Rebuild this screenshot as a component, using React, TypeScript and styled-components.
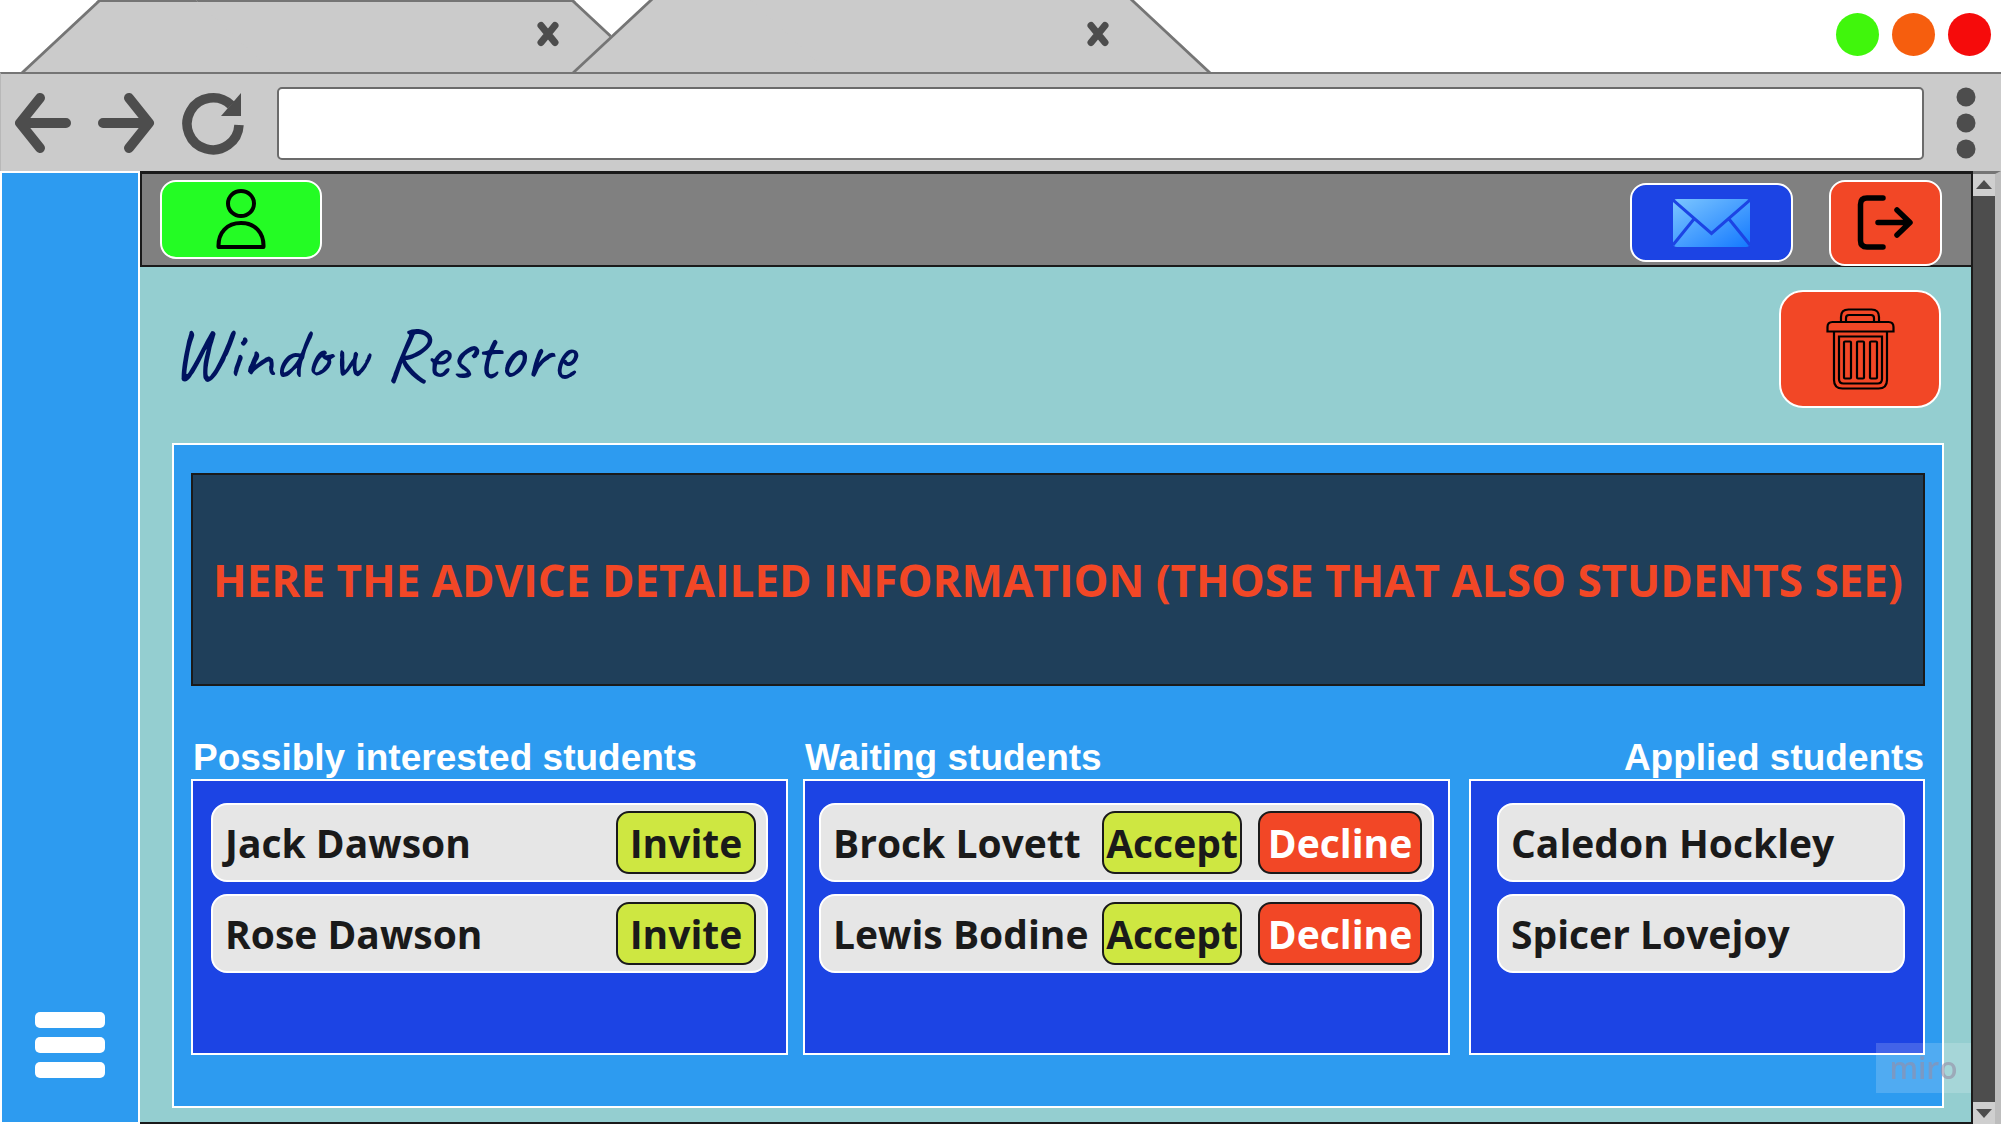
import React from "react";
import styled, { createGlobalStyle } from "styled-components";

const color = {
  chrome: "#cbcbcb",
  chromeLine: "#757575",
  glyph: "#4d4d4d",
  ink: "#1a1a1a",
  sky: "#2d9bf0",
  royal: "#1c44e4",
  teal: "#94ced0",
  lime: "#cee741",
  red: "#f24726",
};

const GlobalStyle = createGlobalStyle`
  *, *::before, *::after { box-sizing: border-box; }
  body { margin: 0; background: #fff; font-family: "Open Sans", "Noto Sans", sans-serif; }
  h1, h2, p, ul { margin: 0; padding: 0; }
  ul { list-style: none; }
  button { font: inherit; cursor: pointer; }
  svg { display: block; }
`;

const Page = styled.div`
  display: flex;
  flex-direction: column;
  min-height: 100vh;
`;

/* ---------- browser frame ---------- */

const TabStrip = styled.div`
  display: flex;
  align-items: stretch;
  height: 72px;
  padding: 0 10px 0 21px;
  overflow: hidden;
`;

const Tab = styled.div<{ $active?: boolean }>`
  position: relative;
  isolation: isolate;
  display: flex;
  align-items: center;
  justify-content: flex-end;
  flex: 0 1 ${(p) => (p.$active ? 639 : 630)}px;
  margin-left: ${(p) => (p.$active ? -79 : 0)}px;
  padding-right: ${(p) => (p.$active ? 101 : 91)}px;
  padding-bottom: 4px;

  &::before,
  &::after {
    content: "";
    position: absolute;
    z-index: -1;
    top: 0;
    bottom: 0;
    width: 60%;
    background: ${color.chrome};
    border: 0 solid ${color.chromeLine};
    border-top-width: ${(p) => (p.$active ? 0 : 2)}px;
  }
  &::before {
    left: 0;
    border-left-width: 4px;
    transform: skewX(-47deg);
    transform-origin: bottom left;
  }
  &::after {
    right: 0;
    border-right-width: 4px;
    transform: skewX(47deg);
    transform-origin: bottom right;
  }
`;

const PlainButton = styled.button`
  display: flex;
  align-items: center;
  justify-content: center;
  flex: none;
  padding: 0;
  border: 0;
  background: none;
`;

const WindowControls = styled.div`
  display: flex;
  align-items: center;
  gap: 13px;
  margin-left: auto;
  padding-bottom: 4px;
`;

const WindowDot = styled.button<{ $fill: string }>`
  width: 43px;
  height: 43px;
  padding: 0;
  border: 0;
  border-radius: 50%;
  background: ${(p) => p.$fill};
`;

const Toolbar = styled.div`
  display: flex;
  align-items: center;
  gap: 32px;
  height: 99px;
  padding: 1px 25px 0 14px;
  border: 0 solid ${color.chromeLine};
  border-top-width: 2px;
  border-left: 1px solid #b8b8b8;
  background: ${color.chrome};
`;

const NavButtons = styled.div`
  display: flex;
  align-items: center;
  gap: 26px;
`;

const AddressBar = styled.input`
  flex: 1;
  min-width: 0;
  height: 73px;
  padding: 0 20px;
  border: 2px solid #6b6b6b;
  border-radius: 5px;
  background: #fff;
  font-size: 32px;
`;

const Viewport = styled.div`
  display: flex;
  flex: 1;
`;

const ScrollTrack = styled.div`
  display: flex;
  flex-direction: column;
  justify-content: space-between;
  width: 28px;
  border-top: 3px solid ${color.chromeLine};
  border-right: 6px solid #bdbdbd;
  background: ${color.glyph};
`;

const ScrollButton = styled(PlainButton)`
  width: 22px;
  height: 22px;
  background: #cfcfcf;
`;

/* ---------- application ---------- */

const Sidebar = styled.nav`
  display: flex;
  flex-direction: column;
  justify-content: flex-end;
  align-items: center;
  width: 140px;
  padding-bottom: 44px;
  border: 2px solid #fff;
  background: ${color.sky};
`;

const MenuButton = styled(PlainButton)`
  flex-direction: column;
  gap: 9px;
`;

const MenuBar = styled.span`
  width: 70px;
  height: 16px;
  border-radius: 5px;
  background: #fff;
`;

const Main = styled.main`
  display: flex;
  flex: 1;
  flex-direction: column;
  min-width: 0;
  border: 0 solid ${color.ink};
  border-right-width: 2px;
  border-bottom-width: 2px;
  background: ${color.teal};
`;

const Header = styled.header`
  display: flex;
  align-items: center;
  gap: 36px;
  height: 96px;
  padding: 6px 29px 0 18px;
  border: 2px solid ${color.ink};
  border-top-width: 3px;
  border-right: 0;
  background: #808080;
`;

const Tile = styled.button<{ $fill: string; $w: number; $h: number; $r: number }>`
  display: flex;
  align-items: center;
  justify-content: center;
  flex: none;
  width: ${(p) => p.$w}px;
  height: ${(p) => p.$h}px;
  padding: 0;
  border: 2px solid #fff;
  border-radius: ${(p) => p.$r}px;
  background: ${(p) => p.$fill};
`;

const ProfileTile = styled(Tile)`
  align-self: flex-start;
  margin-right: auto;
`;

const TitleRow = styled.div`
  display: flex;
  align-items: flex-start;
  justify-content: space-between;
  padding: 23px 30px 35px 31px;
`;

const Title = styled.h1`
  padding-top: 24px;
  color: #00135f;
  font-family: Caveat, Lato, cursive;
  font-size: 74px;
  font-weight: 400;
  line-height: 80px;
`;

const Panel = styled.section`
  display: flex;
  flex: 1;
  flex-direction: column;
  margin: 0 27px 14px 32px;
  padding: 28px 17px 51px;
  border: 2px solid #fff;
  background: ${color.sky};
`;

const Advice = styled.p`
  display: flex;
  align-items: center;
  justify-content: center;
  min-height: 213px;
  padding: 0 10px;
  border: 2px solid ${color.ink};
  background: #1f3f5a;
  color: ${color.red};
  font-size: 44px;
  font-weight: 700;
  line-height: 60px;
  text-align: center;
`;

const Columns = styled.div`
  display: grid;
  flex: 1;
  grid-template-columns: minmax(0, 597fr) minmax(0, 647fr) minmax(0, 460fr);
  gap: 15px;
  margin-top: 49px;
`;

const Column = styled.section<{ $end?: boolean }>`
  display: flex;
  flex-direction: column;
  margin-left: ${(p) => (p.$end ? 4 : 0)}px;
`;

const ColumnTitle = styled.h2<{ $end?: boolean }>`
  padding: 2px ${(p) => (p.$end ? 1 : 2)}px 0;
  color: #fff;
  font-family: "Liberation Sans", Arial, sans-serif;
  font-size: 37px;
  line-height: 42px;
  text-align: ${(p) => (p.$end ? "right" : "left")};
  white-space: nowrap;
`;

const StudentList = styled.ul<{ $left: number; $right: number }>`
  display: flex;
  flex: 1;
  flex-direction: column;
  gap: 12px;
  padding: 22px ${(p) => p.$right}px 22px ${(p) => p.$left}px;
  border: 2px solid #fff;
  background: ${color.royal};
`;

const StudentCard = styled.li`
  display: flex;
  align-items: center;
  gap: 16px;
  height: 79px;
  padding: 0 10px 0 12px;
  border: 2px solid #fff;
  border-radius: 16px;
  background: #e6e6e6;
`;

const StudentName = styled.span`
  flex: 1;
  min-width: 0;
  color: ${color.ink};
  font-size: 39px;
  font-weight: 700;
  line-height: 56px;
  white-space: nowrap;
`;

const ActionButton = styled.button<{ $danger?: boolean }>`
  display: flex;
  align-items: center;
  justify-content: center;
  flex: none;
  width: ${(p) => (p.$danger ? 164 : 140)}px;
  height: 63px;
  padding: 0;
  border: 2px solid ${color.ink};
  border-radius: 13px;
  background: ${(p) => (p.$danger ? color.red : color.lime)};
  color: ${(p) => (p.$danger ? "#fff" : color.ink)};
  font-size: 39px;
  font-weight: 700;
  line-height: 56px;
`;

const Watermark = styled.div`
  position: fixed;
  right: 30px;
  bottom: 31px;
  display: flex;
  align-items: center;
  justify-content: center;
  width: 95px;
  height: 50px;
  background: rgba(255, 255, 255, 0.17);
  color: rgba(150, 140, 165, 0.6);
  font-size: 30px;
  font-weight: 600;
  line-height: 40px;
  pointer-events: none;
`;

/* ---------- icons ---------- */

const CloseIcon = () => (
  <svg width="24" height="26" viewBox="0 0 24 26" fill="none" stroke={color.glyph} strokeWidth="7" strokeLinecap="round">
    <path d="M5 4.500 19 21.500M19 4.500 5 21.500" />
  </svg>
);

const ArrowIcon = ({ forward }: { forward?: boolean }) => (
  <svg width="57" height="62" viewBox="0 0 57 62" fill="none" stroke={color.glyph} strokeWidth="10" strokeLinecap="round" strokeLinejoin="round">
    {forward ? <path d="M5 31H50M31 6 51 31 31 56" /> : <path d="M51 31H6M25 6 5 31 25 56" />}
  </svg>
);

const ReloadIcon = () => (
  <svg width="64" height="64" viewBox="0 0 64 64">
    <path d="M58 34A26 26 0 1 1 50 14" fill="none" stroke={color.glyph} strokeWidth="9.500" />
    <path d="M60 2V25H40Z" fill={color.glyph} />
  </svg>
);

const MoreIcon = () => (
  <svg width="20" height="72" viewBox="0 0 20 72" fill={color.glyph}>
    <circle cx="10" cy="10" r="9.500" />
    <circle cx="10" cy="36" r="9.500" />
    <circle cx="10" cy="62" r="9.500" />
  </svg>
);

const Triangle = ({ down }: { down?: boolean }) => (
  <svg width="16" height="10" viewBox="0 0 16 10" fill={color.glyph}>
    <path d={down ? "M0 1H16L8 10Z" : "M0 9H16L8 0Z"} />
  </svg>
);

const PersonIcon = () => (
  <svg width="50" height="62" viewBox="0 0 50 62" fill="none" stroke="#000" strokeWidth="4" strokeLinejoin="round">
    <ellipse cx="25" cy="14.500" rx="13" ry="12.500" />
    <path d="M2.500 58C2 43.500 11 34 25 34S48 43.500 47.500 58Z" />
  </svg>
);

const MailIcon = () => (
  <svg width="77" height="48" viewBox="0 0 77 48">
    <defs>
      <linearGradient id="mail" x1="0" y1="0" x2="1" y2="1">
        <stop offset="0" stopColor="#7cc6ff" />
        <stop offset="1" stopColor="#1479ff" />
      </linearGradient>
    </defs>
    <rect width="77" height="48" rx="4" fill="url(#mail)" />
    <path d="M0 1 38.500 34.500 77 1M21 20 0 46M56 20 77 46" fill="none" stroke={color.royal} strokeWidth="3" />
  </svg>
);

const LogoutIcon = () => (
  <svg width="57" height="56" viewBox="0 0 57 56" fill="none" stroke="#000" strokeWidth="5.500" strokeLinecap="round" strokeLinejoin="round">
    <path d="M26 3H10Q3.500 3 3.500 9.500V45.500Q3.500 52 10 52H26" />
    <path d="M21 27.500H52M40 15 53 27.500 40 40" />
  </svg>
);

const TrashIcon = () => (
  <svg width="69" height="82" viewBox="0 0 69 82" fill="none" stroke="#000" strokeWidth="2.200">
    <path d="M15 14V9Q15 1.500 22.500 1.500H45.500Q53 1.500 53 9V14" />
    <path d="M20 14V10Q20 7 23 7H45Q48 7 48 10V14" />
    <path d="M1.500 23.500V19Q1.500 14 6.500 14H62.500Q67.500 14 67.500 19V23.500Z" />
    <path d="M8 23.500V72Q8 80.500 16.500 80.500H52.500Q61 80.500 61 72V23.500" />
    <path d="M13 28.500H56V71Q56 75.500 51.500 75.500H17.500Q13 75.500 13 71Z" />
    <rect x="18" y="33.500" width="7" height="37" rx="1" />
    <rect x="31" y="33.500" width="7" height="37" rx="1" />
    <rect x="44" y="33.500" width="7" height="37" rx="1" />
  </svg>
);

/* ---------- data ---------- */

type Action = "Invite" | "Accept" | "Decline";

interface Group {
  title: string;
  students: string[];
  actions: Action[];
  left: number;
  right: number;
  end?: boolean;
}

const groups: Group[] = [
  { title: "Possibly interested students", students: ["Jack Dawson", "Rose Dawson"], actions: ["Invite"], left: 18, right: 18 },
  { title: "Waiting students", students: ["Brock Lovett", "Lewis Bodine"], actions: ["Accept", "Decline"], left: 14, right: 14 },
  { title: "Applied students", students: ["Caledon Hockley", "Spicer Lovejoy"], actions: [], left: 26, right: 18, end: true },
];

const StudentColumn = ({ group }: { group: Group }) => (
  <Column $end={group.end}>
    <ColumnTitle $end={group.end}>{group.title}</ColumnTitle>
    <StudentList $left={group.left} $right={group.right}>
      {group.students.map((name) => (
        <StudentCard key={name}>
          <StudentName>{name}</StudentName>
          {group.actions.map((action) => (
            <ActionButton key={action} type="button" $danger={action === "Decline"}>
              {action}
            </ActionButton>
          ))}
        </StudentCard>
      ))}
    </StudentList>
  </Column>
);

export default function App() {
  return (
    <Page>
      <GlobalStyle />
      <TabStrip>
        <Tab>
          <PlainButton type="button" aria-label="Close tab"><CloseIcon /></PlainButton>
        </Tab>
        <Tab $active>
          <PlainButton type="button" aria-label="Close tab"><CloseIcon /></PlainButton>
        </Tab>
        <WindowControls>
          <WindowDot type="button" aria-label="Minimize" $fill="#40f60c" />
          <WindowDot type="button" aria-label="Maximize" $fill="#f65e0e" />
          <WindowDot type="button" aria-label="Close window" $fill="#f60b0b" />
        </WindowControls>
      </TabStrip>
      <Toolbar>
        <NavButtons>
          <PlainButton type="button" aria-label="Back"><ArrowIcon /></PlainButton>
          <PlainButton type="button" aria-label="Forward"><ArrowIcon forward /></PlainButton>
          <PlainButton type="button" aria-label="Reload"><ReloadIcon /></PlainButton>
        </NavButtons>
        <AddressBar type="text" aria-label="Address" />
        <PlainButton type="button" aria-label="More options"><MoreIcon /></PlainButton>
      </Toolbar>
      <Viewport>
        <Sidebar>
          <MenuButton type="button" aria-label="Menu">
            <MenuBar />
            <MenuBar />
            <MenuBar />
          </MenuButton>
        </Sidebar>
        <Main>
          <Header>
            <ProfileTile type="button" aria-label="Profile" $fill="#24fc24" $w={162} $h={79} $r={16}>
              <PersonIcon />
            </ProfileTile>
            <Tile type="button" aria-label="Messages" $fill={color.royal} $w={163} $h={79} $r={16}>
              <MailIcon />
            </Tile>
            <Tile type="button" aria-label="Log out" $fill={color.red} $w={113} $h={86} $r={16}>
              <LogoutIcon />
            </Tile>
          </Header>
          <TitleRow>
            <Title>Window Restore</Title>
            <Tile type="button" aria-label="Delete" $fill={color.red} $w={162} $h={118} $r={24}>
              <TrashIcon />
            </Tile>
          </TitleRow>
          <Panel>
            <Advice>HERE THE ADVICE DETAILED INFORMATION (THOSE THAT ALSO STUDENTS SEE)</Advice>
            <Columns>
              {groups.map((group) => (
                <StudentColumn key={group.title} group={group} />
              ))}
            </Columns>
          </Panel>
        </Main>
        <ScrollTrack>
          <ScrollButton type="button" aria-label="Scroll up"><Triangle /></ScrollButton>
          <ScrollButton type="button" aria-label="Scroll down"><Triangle down /></ScrollButton>
        </ScrollTrack>
      </Viewport>
      <Watermark>miro</Watermark>
    </Page>
  );
}
